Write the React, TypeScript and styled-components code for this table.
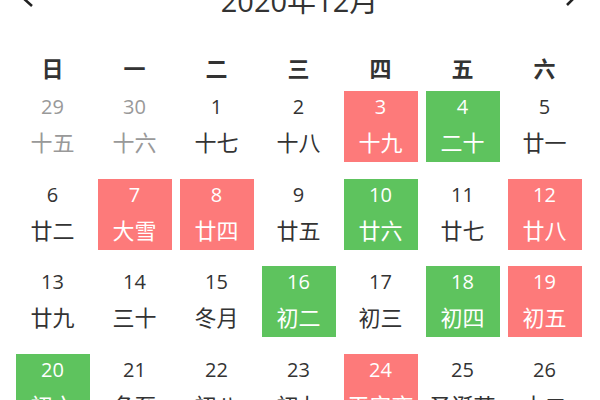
import React from "react";
import styled, { createGlobalStyle } from "styled-components";

const Global = createGlobalStyle`
  html, body { margin: 0; padding: 0; background: #fff; overflow: hidden; }
  body { font-family: "Open Sans", "Noto Sans CJK SC", sans-serif; color: #333; }
`;

const Page = styled.div`
  width: 600px;
  height: 400px;
  overflow: hidden;
`;

const Header = styled.div`
  display: flex;
  align-items: center;
  justify-content: space-between;
  height: 40px;
  margin-top: -19px;
  padding: 0 20px 0 19px;
`;

const Title = styled.div`
  font-size: 29px;
  line-height: 40px;
  color: #333;
`;

const Arrow = styled.svg`
  width: 16px;
  height: 20px;
  margin-top: 2px;
  flex: none;
`;

const WeekRow = styled.div`
  display: grid;
  grid-template-columns: repeat(7, 74px);
  column-gap: 8px;
  padding-left: 15.5px;
  margin-top: 27px;
  height: 40px;
`;

const WeekLabel = styled.div`
  text-align: center;
  font-size: 22px;
  line-height: 40px;
  font-weight: bold;
  color: #333;
`;

const Grid = styled.div`
  display: grid;
  grid-template-columns: repeat(7, 74px);
  grid-auto-rows: 71px;
  column-gap: 8px;
  row-gap: 16.5px;
  padding-left: 15.5px;
  margin-top: 3px;
`;

type Tone = "red" | "green" | "none";

const Cell = styled.div<{ $tone: Tone; $muted: boolean }>`
  display: flex;
  flex-direction: column;
  align-items: center;
  background: ${(p) =>
    p.$tone === "red" ? "#fd7a7a" : p.$tone === "green" ? "#5ec35e" : "transparent"};
  color: ${(p) => (p.$tone !== "none" ? "#fff" : p.$muted ? "#999" : "#333")};
`;

const Num = styled.div`
  font-size: 20px;
  line-height: 32px;
`;

const Lunar = styled.div`
  font-size: 22px;
  line-height: 38px;
  white-space: nowrap;
`;

const weekdays = ["日", "一", "二", "三", "四", "五", "六"];

type Day = { n: number; l: string; t?: Tone; m?: boolean };

const days: Day[] = [
  { n: 29, l: "十五", m: true },
  { n: 30, l: "十六", m: true },
  { n: 1, l: "十七" },
  { n: 2, l: "十八" },
  { n: 3, l: "十九", t: "red" },
  { n: 4, l: "二十", t: "green" },
  { n: 5, l: "廿一" },
  { n: 6, l: "廿二" },
  { n: 7, l: "大雪", t: "red" },
  { n: 8, l: "廿四", t: "red" },
  { n: 9, l: "廿五" },
  { n: 10, l: "廿六", t: "green" },
  { n: 11, l: "廿七" },
  { n: 12, l: "廿八", t: "red" },
  { n: 13, l: "廿九" },
  { n: 14, l: "三十" },
  { n: 15, l: "冬月" },
  { n: 16, l: "初二", t: "green" },
  { n: 17, l: "初三" },
  { n: 18, l: "初四", t: "green" },
  { n: 19, l: "初五", t: "red" },
  { n: 20, l: "初六", t: "green" },
  { n: 21, l: "冬至" },
  { n: 22, l: "初八" },
  { n: 23, l: "初九" },
  { n: 24, l: "平安夜", t: "red" },
  { n: 25, l: "圣诞节" },
  { n: 26, l: "十二" },
];

export default function App() {
  return (
    <Page>
      <Global />
      <Header>
        <Arrow viewBox="0 0 16 20">
          <polyline points="13,-4 3,5 13,14" fill="none" stroke="#222" strokeWidth="2.6" />
        </Arrow>
        <Title>2020年12月</Title>
        <Arrow viewBox="0 0 16 20">
          <polyline points="3,-6 13,3 3,13" fill="none" stroke="#222" strokeWidth="2.6" />
        </Arrow>
      </Header>
      <WeekRow>
        {weekdays.map((w) => (
          <WeekLabel key={w}>{w}</WeekLabel>
        ))}
      </WeekRow>
      <Grid>
        {days.map((d, i) => (
          <Cell key={i} $tone={d.t ?? "none"} $muted={!!d.m}>
            <Num>{d.n}</Num>
            <Lunar>{d.l}</Lunar>
          </Cell>
        ))}
      </Grid>
    </Page>
  );
}
